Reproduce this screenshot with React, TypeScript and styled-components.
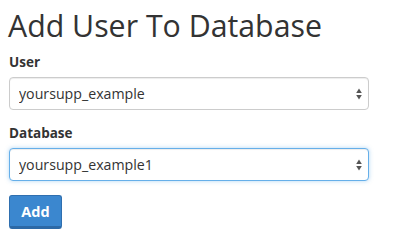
import React from 'react'
import styled, { createGlobalStyle } from 'styled-components'

const GlobalStyle = createGlobalStyle`
  body {
    margin: 0;
    background: #fff;
    font-family: "Open Sans", "Liberation Sans", sans-serif;
    color: #333;
  }
`

const Page = styled.div`
  padding: 6px 26px 0 9px;
`

const Title = styled.h1`
  margin: 0 0 7px -1px;
  font-size: 30.3px;
  font-weight: 400;
  line-height: 40px;
  color: #333;
`

const Field = styled.div`
  display: flex;
  flex-direction: column;
  margin-bottom: 14px;
`

const Label = styled.label`
  font-size: 13.5px;
  font-weight: 700;
  line-height: 19px;
  margin-bottom: 5px;
`

const SelectWrap = styled.div`
  position: relative;
`

const Select = styled.select<{ $focused?: boolean }>`
  appearance: none;
  -webkit-appearance: none;
  display: block;
  width: 100%;
  height: 33px;
  padding: 0 24px 0 9px;
  font-family: "Open Sans", "Liberation Sans", sans-serif;
  font-size: 14.2px;
  color: #333;
  background: #fff;
  border: 1px solid ${({ $focused }) => ($focused ? '#66afe9' : '#ccc')};
  border-radius: 4px;
  box-shadow: ${({ $focused }) =>
    $focused
      ? 'inset 0 1px 1px rgba(0,0,0,.075), 0 0 4px rgba(102,175,233,.5)'
      : 'inset 0 1px 1px rgba(0,0,0,.075)'};
  outline: none;
`

const Arrows = styled.svg`
  position: absolute;
  right: 7px;
  top: 50%;
  transform: translateY(-50%);
  pointer-events: none;
`

const AddButton = styled.button`
  display: block;
  margin-top: 2px;
  width: 53px;
  height: 34px;
  padding: 0;
  font-family: "Open Sans", "Liberation Sans", sans-serif;
  font-size: 14.5px;
  font-weight: 700;
  color: #fff;
  background: #3b87cf;
  border: 1px solid #2f6faf;
  border-bottom: 3px solid #2c69a6;
  border-radius: 3px;
`

const Updown = () => (
  <Arrows width="6" height="12" viewBox="0 0 6 12">
    <path d="M3 0.5 L5.8 5 H0.2 Z" fill="#555" />
    <path d="M3 11.5 L5.8 7 H0.2 Z" fill="#555" />
  </Arrows>
)

const App = () => {
  return (
    <Page>
      <GlobalStyle />
      <Title>Add User To Database</Title>
      <Field>
        <Label>User</Label>
        <SelectWrap>
          <Select defaultValue="yoursupp_example">
            <option>yoursupp_example</option>
          </Select>
          <Updown />
        </SelectWrap>
      </Field>
      <Field>
        <Label>Database</Label>
        <SelectWrap>
          <Select $focused defaultValue="yoursupp_example1">
            <option>yoursupp_example1</option>
          </Select>
          <Updown />
        </SelectWrap>
      </Field>
      <AddButton>Add</AddButton>
    </Page>
  )
}

export default App
